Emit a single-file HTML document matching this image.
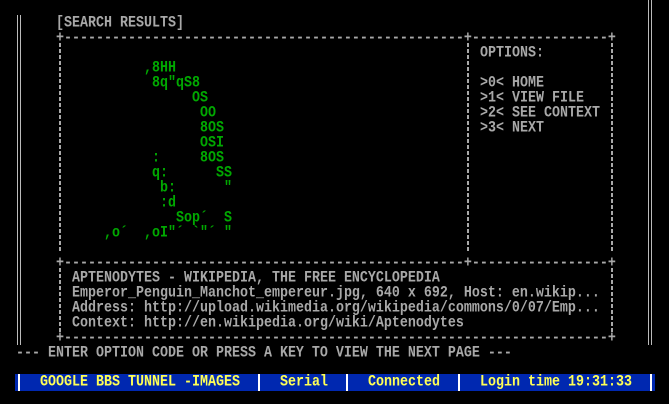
<!DOCTYPE html>
<html><head><meta charset="utf-8"><style>
html,body{margin:0;padding:0;background:#000;width:669px;height:404px;overflow:hidden}
body{position:relative;font-family:"Liberation Mono",monospace;font-size:13.33px;font-weight:bold;color:#a8a8a8}
.t{position:absolute;white-space:pre;line-height:15px;height:15px;margin-top:1px;transform:scaleY(1.2);transform-origin:50% 50%}
.g{color:#00a800}
.v{position:absolute;width:2px;background:repeating-linear-gradient(to bottom,#a8a8a8 0 4px,transparent 4px 6px)}
.l{position:absolute;width:1px;background:#bbb}
.bar{position:absolute;left:15px;top:374px;width:640px;height:17px;background:#0028b0}
.sep{position:absolute;top:374px;width:2px;height:17px;background:#fff}
.y{color:#ffff55;line-height:17px;height:17px;top:374px;margin-top:0}
</style></head><body>
<div class="l" style="left:17px;top:15px;height:330px"></div>
<div class="l" style="left:20px;top:15px;height:330px"></div>
<div class="l" style="left:648px;top:0;height:345px"></div>
<div class="l" style="left:651px;top:0;height:345px"></div>

<div class="t" style="left:56px;top:15px">[SEARCH RESULTS]</div>
<div class="t" style="left:56px;top:30px">+--------------------------------------------------+-----------------+</div>
<div class="v" style="left:59px;top:43px;height:210px"></div>
<div class="v" style="left:467px;top:43px;height:210px"></div>
<div class="v" style="left:611px;top:43px;height:210px"></div>
<div class="t" style="left:56px;top:255px">+--------------------------------------------------+-----------------+</div>
<div class="v" style="left:59px;top:268px;height:64px"></div>
<div class="v" style="left:611px;top:268px;height:64px"></div>
<div class="t" style="left:56px;top:330px">+--------------------------------------------------------------------+</div>

<div class="t" style="left:480px;top:45px">OPTIONS:</div>
<div class="t" style="left:480px;top:75px">&gt;0&lt; HOME</div>
<div class="t" style="left:480px;top:90px">&gt;1&lt; VIEW FILE</div>
<div class="t" style="left:480px;top:105px">&gt;2&lt; SEE CONTEXT</div>
<div class="t" style="left:480px;top:120px">&gt;3&lt; NEXT</div>

<div class="t g" style="left:144px;top:60px">,8HH</div>
<div class="t g" style="left:152px;top:75px">8q"qS8</div>
<div class="t g" style="left:192px;top:90px">OS</div>
<div class="t g" style="left:200px;top:105px">OO</div>
<div class="t g" style="left:200px;top:120px">8OS</div>
<div class="t g" style="left:200px;top:135px">OSI</div>
<div class="t g" style="left:152px;top:150px">:     8OS</div>
<div class="t g" style="left:152px;top:165px">q:      SS</div>
<div class="t g" style="left:160px;top:180px">b:      "</div>
<div class="t g" style="left:160px;top:195px">:d</div>
<div class="t g" style="left:176px;top:210px">Sop´  S</div>
<div class="t g" style="left:104px;top:225px">,o´  ,oI"´ `"´ "</div>

<div class="t" style="left:72px;top:270px">APTENODYTES - WIKIPEDIA, THE FREE ENCYCLOPEDIA</div>
<div class="t" style="left:72px;top:285px">Emperor_Penguin_Manchot_empereur.jpg, 640 x 692, Host: en.wikip...</div>
<div class="t" style="left:72px;top:300px">Address: http://upload.wikimedia.org/wikipedia/commons/0/07/Emp...</div>
<div class="t" style="left:72px;top:315px">Context: http://en.wikipedia.org/wiki/Aptenodytes</div>

<div class="t" style="left:16px;top:345px">--- ENTER OPTION CODE OR PRESS A KEY TO VIEW THE NEXT PAGE ---</div>

<div class="bar"></div>
<div class="sep" style="left:18px"></div>
<div class="sep" style="left:258px"></div>
<div class="sep" style="left:346px"></div>
<div class="sep" style="left:458px"></div>
<div class="sep" style="left:650px"></div>
<div class="t y" style="left:40px">GOOGLE BBS TUNNEL -IMAGES</div>
<div class="t y" style="left:280px">Serial</div>
<div class="t y" style="left:368px">Connected</div>
<div class="t y" style="left:480px">Login time 19:31:33</div>
</body></html>
